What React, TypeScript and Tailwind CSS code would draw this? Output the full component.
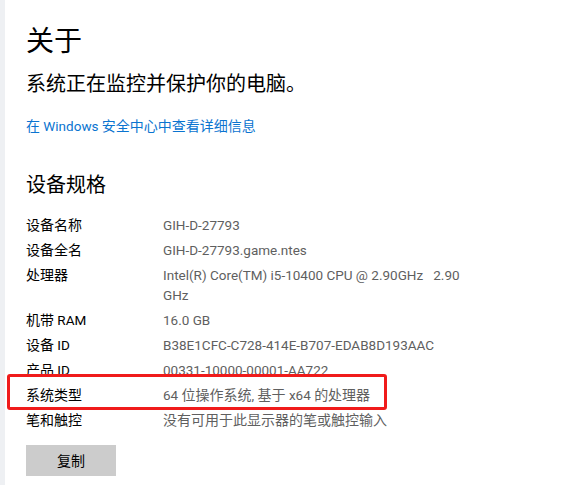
import React from 'react';

const specs: { label: string; value: string }[] = [
  { label: '设备名称', value: 'GIH-D-27793' },
  { label: '设备全名', value: 'GIH-D-27793.game.ntes' },
  { label: '处理器', value: 'Intel(R) Core(TM) i5-10400 CPU @ 2.90GHz   2.90 GHz' },
  { label: '机带 RAM', value: '16.0 GB' },
  { label: '设备 ID', value: 'B38E1CFC-C728-414E-B707-EDAB8D193AAC' },
  { label: '产品 ID', value: '00331-10000-00001-AA722' },
  { label: '系统类型', value: '64 位操作系统, 基于 x64 的处理器' },
  { label: '笔和触控', value: '没有可用于此显示器的笔或触控输入' },
];

const font = "font-['Segoe_UI','Noto_Sans','Noto_Sans_CJK_SC',sans-serif]";

// 西文部分用稍窄的字体，中文保持 14px
const Mixed = ({ text }: { text: string }) => (
  <>
    {text.split(/([\u3000-\u9fff\uff00-\uffef]+)/).map((part, i) =>
      /[\u3000-\u9fff\uff00-\uffef]/.test(part) ? (
        <span key={i}>{part}</span>
      ) : (
        <span key={i} className="font-['Roboto','Noto_Sans',sans-serif] text-[13.5px]">{part}</span>
      )
    )}
  </>
);

export default function App() {
  return (
    <div className={`relative flex min-h-[485px] w-[577px] bg-white ${font}`}>
      {/* 左侧窄条 */}
      <div className="w-[5px] shrink-0 bg-[#eef0f3]" />

      <div className="flex flex-col pl-[21px]">
        <h1 className="mt-[22px] text-[28px] leading-[36px] font-normal text-black">关于</h1>
        <p className="mt-[12px] text-[20px] leading-[28px] text-black">系统正在监控并保护你的电脑。</p>
        <a className="mt-[18px] text-[14px] leading-[20px] text-[#0a74d0]">
          <Mixed text="在 Windows 安全中心中查看详细信息" />
        </a>

        <h2 className="mt-[35px] text-[20px] leading-[28px] font-normal text-black">设备规格</h2>

        <div className="mt-[16px] flex flex-col gap-[5px]">
          {specs.map(s => (
            <div key={s.label} className="flex text-[14px] leading-[20px]">
              <div className="w-[137px] shrink-0 text-black">
                <Mixed text={s.label} />
              </div>
              <div className="w-[302px] whitespace-pre-wrap text-[#5f5f5f]">
                <Mixed text={s.value} />
              </div>
            </div>
          ))}
        </div>

        <button className="mt-[15px] mb-[10px] h-[31px] w-[90px] bg-[#cccccc] text-[14px] text-black">复制</button>
      </div>

      {/* 红框标注 */}
      <div className="absolute left-[7px] top-[374px] h-[36px] w-[380px] rounded-[3px] border-[3px] border-[#f01b1b]" />
    </div>
  );
}
